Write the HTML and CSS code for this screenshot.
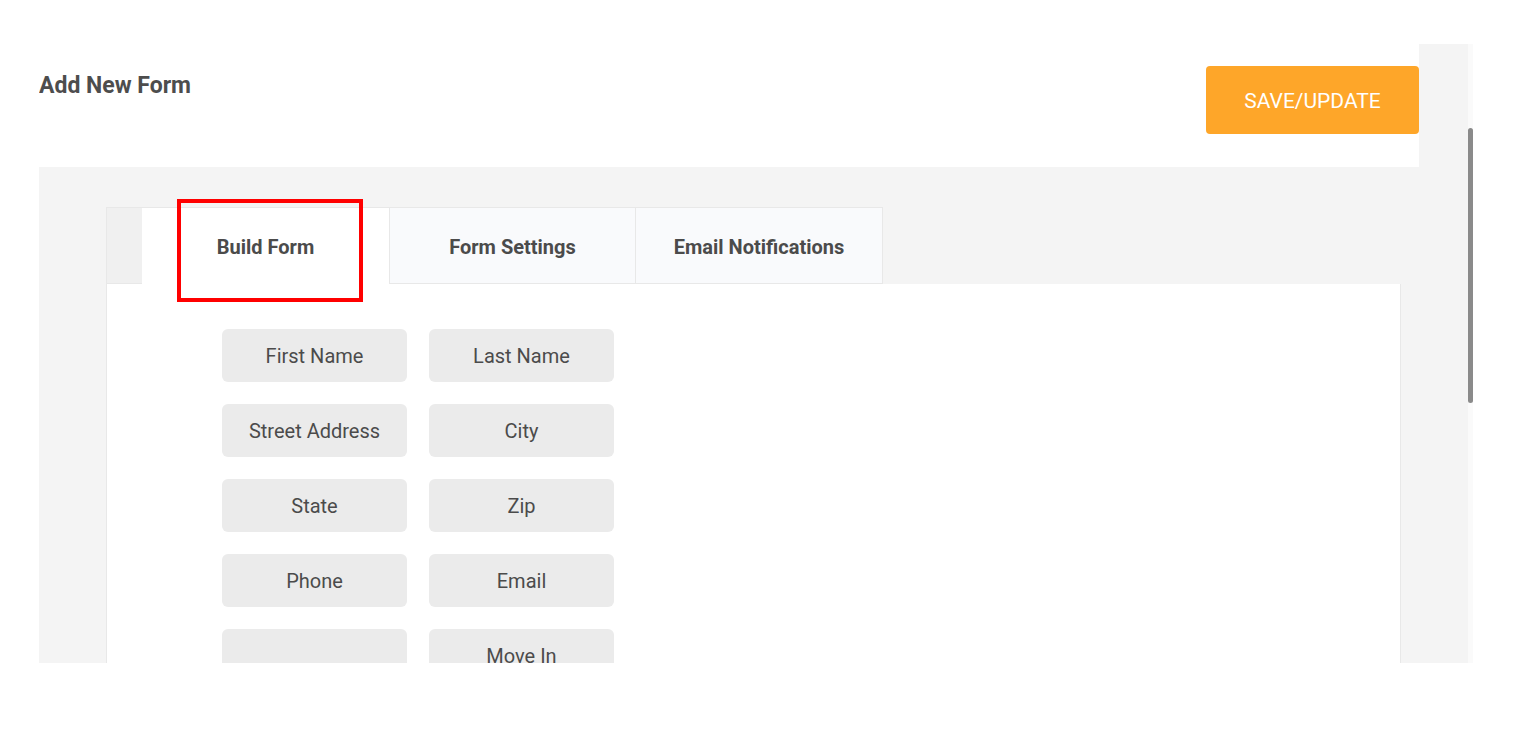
FILE: index.html
```html
<!DOCTYPE html>
<html lang="en">
<head>
<meta charset="utf-8">
<title>Add New Form</title>
<link rel="stylesheet" href="styles.css">
</head>
<body>
<div class="frame">
  <div class="content">
    <div class="header">
      <h1 class="title">Add New Form</h1>
      <button class="save-btn" type="button">SAVE/UPDATE</button>
    </div>
    <div class="panel">
      <div class="card">
        <div class="tabs">
          <div class="tab-spacer"></div>
          <div class="tab tab-active">Build Form</div>
          <div class="tab">Form Settings</div>
          <div class="tab">Email Notifications</div>
        </div>
        <div class="card-body">
          <div class="fields">
            <div class="field">First Name</div>
            <div class="field">Last Name</div>
            <div class="field">Street Address</div>
            <div class="field">City</div>
            <div class="field">State</div>
            <div class="field">Zip</div>
            <div class="field">Phone</div>
            <div class="field">Email</div>
            <div class="field"></div>
            <div class="field">Move In</div>
            <div class="field"></div>
            <div class="field"></div>
          </div>
        </div>
        <div class="highlight"></div>
      </div>
    </div>
  </div>
  <div class="track"><div class="thumb"></div></div>
</div>
</body>
</html>
```

FILE: styles.css
```css
html, body {
  margin: 0;
  padding: 0;
  background: #ffffff;
}

body {
  font-family: Roboto, "Liberation Sans", Arial, sans-serif;
  color: #4b4b4b;
}

.frame {
  margin: 44px 0 0 39px;
  width: 1434px;
  height: 619px;
  display: flex;
  overflow: hidden;
  background: #f4f4f4;
}

.content {
  width: 1429px;
  flex: none;
}

.header {
  width: 1380px;
  height: 123px;
  background: #ffffff;
  display: flex;
  justify-content: space-between;
  align-items: flex-start;
}

.title {
  margin: 28px 0 0 0;
  font-size: 23px;
  line-height: 27px;
  font-weight: 700;
  color: #4d4d4d;
}

.save-btn {
  margin-top: 22px;
  width: 213px;
  height: 68px;
  border: none;
  border-radius: 4px;
  background: #fea629;
  color: #ffffff;
  font-family: Roboto, "Liberation Sans", Arial, sans-serif;
  font-size: 21px;
  font-weight: 400;
  padding: 2px 0 0 0;
}

.panel {
  padding: 40px 67px 0 67px;
}

.card {
  position: relative;
}

.tabs {
  display: flex;
  height: 77px;
}

.tab-spacer {
  width: 35px;
  background: #f0f0f0;
  border-top: 1px solid #e8e8e8;
  border-left: 1px solid #e8e8e8;
  border-bottom: 1px solid #e8e8e8;
}

.tab {
  width: 246px;
  display: flex;
  align-items: center;
  justify-content: center;
  background: #f9fafc;
  border-top: 1px solid #e8e8e8;
  border-left: 1px solid #e8e8e8;
  border-bottom: 1px solid #e8e8e8;
  font-size: 20px;
  font-weight: 700;
  color: #4b4b4b;
  box-sizing: border-box;
  padding-top: 3px;
}

.tab:last-child {
  border-right: 1px solid #e8e8e8;
  width: 248px;
}

.tab-active {
  background: #ffffff;
  border-left: none;
  border-bottom-color: #ffffff;
  width: 247px;
}

.card-body {
  background: #ffffff;
  border-left: 1px solid #e8e8e8;
  border-right: 1px solid #e8e8e8;
  padding: 45px 0 0 115px;
  height: 500px;
}

.fields {
  display: grid;
  grid-template-columns: 185px 185px;
  grid-auto-rows: 53px;
  column-gap: 22px;
  row-gap: 22px;
}

.field {
  background: #ebebeb;
  border-radius: 6px;
  display: flex;
  align-items: center;
  justify-content: center;
  font-size: 20px;
  color: #4b4b4b;
}

.highlight {
  position: absolute;
  left: 71px;
  top: -8px;
  width: 186px;
  height: 103px;
  box-sizing: border-box;
  border: 4px solid #ff0000;
}

.track {
  position: relative;
  width: 5px;
  flex: none;
  background: #fafafa;
}

.thumb {
  position: absolute;
  left: 0;
  top: 84px;
  width: 5px;
  height: 275px;
  border-radius: 3px;
  background: #8a8a8a;
}
```
